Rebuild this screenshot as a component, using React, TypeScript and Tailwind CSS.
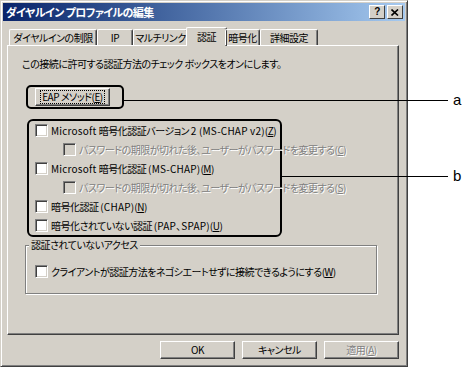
import type { ReactNode } from 'react'

const jp = "font-['MS_UI_Gothic','Noto_Sans_CJK_JP',sans-serif] [font-feature-settings:'palt']"

function Key({ k }: { k: string }) {
  return (
    <>
      (<span className="underline underline-offset-1">{k}</span>)
    </>
  )
}

// latin runs are a bit wider in the original font
function L({ children }: { children: ReactNode }) {
  return <span className="tracking-[0.2px]">{children}</span>
}

function CheckBox({ disabled = false }: { disabled?: boolean }) {
  return (
    <span
      className={`inline-block w-[13px] h-[13px] shrink-0 border border-t-[#808080] border-l-[#808080] border-r-white border-b-white shadow-[inset_1px_1px_0_#404040,inset_-1px_-1px_0_#d4d0c8] ${
        disabled ? 'bg-[#d4d0c8]' : 'bg-white'
      }`}
    />
  )
}

function Row({ children, indent = false, disabled = false }: { children: ReactNode; indent?: boolean; disabled?: boolean }) {
  return (
    <div className={`flex items-center gap-[3px] h-[19px] whitespace-nowrap ${indent ? 'pl-[34px]' : 'pl-[6px]'}`}>
      <CheckBox disabled={disabled} />
      <span className={disabled ? 'text-[#808080] [text-shadow:1px_1px_0_#fff]' : 'text-black'}>{children}</span>
    </div>
  )
}

function Button({ children, disabled = false, focused = false }: { children: ReactNode; disabled?: boolean; focused?: boolean }) {
  return (
    <div
      className={`flex items-center justify-center w-[75px] h-[18px] bg-[#d4d0c8] whitespace-nowrap border border-t-white border-l-white border-r-[#404040] border-b-[#404040] shadow-[inset_-1px_-1px_0_#808080] ${
        disabled ? 'text-[#808080] [text-shadow:1px_1px_0_#fff]' : 'text-black'
      }`}
    >
      <span className={focused ? 'outline outline-1 outline-dotted outline-black px-[1px] leading-[12px]' : ''}>{children}</span>
    </div>
  )
}

const tabs = [
  { label: 'ダイヤルインの制限', w: 'w-[88px]' },
  { label: 'IP', w: 'w-[36px]' },
  { label: 'マルチリンク', w: 'w-[55px]' },
  { label: '認証', w: 'w-[41px]', active: true },
  { label: '暗号化', w: 'w-[35px]' },
  { label: '詳細設定', w: 'w-[58px]' },
]

export default function App() {
  return (
    <div className={`relative w-[466px] h-[372px] bg-white text-[10px] leading-[14px] tracking-[-0.5px] ${jp}`}>
      {/* dialog */}
      <div className="w-[408px] h-[367px] bg-[#d4d0c8] border border-t-[#d4d0c8] border-l-[#d4d0c8] border-r-[#404040] border-b-[#404040] shadow-[inset_1px_1px_0_#fff,inset_-1px_-1px_0_#808080] p-[2px]">
        <div className="flex items-center justify-between h-[18px] pl-[3px] pr-[2px] bg-gradient-to-r from-[#0a246a] to-[#a6caf0]">
          <span className="text-white font-bold text-[11px] leading-[14px] tracking-[-0.6px] whitespace-nowrap">ダイヤルイン プロファイルの編集</span>
          <div className="flex items-center">
            <span className="flex items-center justify-center w-[16px] h-[14px] bg-[#d4d0c8] border border-t-white border-l-white border-r-[#404040] border-b-[#404040] text-[10px] font-bold leading-none text-black font-['Liberation_Sans',sans-serif]">
              ?
            </span>
            <span className="flex items-center justify-center w-[16px] h-[14px] ml-[2px] bg-[#d4d0c8] border border-t-white border-l-white border-r-[#404040] border-b-[#404040] text-black">
              <svg width="8" height="7" viewBox="0 0 8 7">
                <path d="M0.5 0.5 L7 6.5 M7 0.5 L0.5 6.5" stroke="#000" strokeWidth="1.6" />
              </svg>
            </span>
          </div>
        </div>

        {/* tabs */}
        <div className="flex items-end h-[18px] mt-[6px] ml-[6px] relative z-10 whitespace-nowrap">
          {tabs.map((t) =>
            t.active ? (
              <div
                key={t.label}
                className={`${t.w} -mx-[2px] h-[19px] -mb-[1px] flex items-center justify-center bg-[#d4d0c8] border-t border-l border-t-white border-l-white border-r border-r-[#404040] rounded-t-[2px] shadow-[inset_-1px_0_0_#808080]`}
              >
                {t.label}
              </div>
            ) : (
              <div
                key={t.label}
                className={`${t.w} h-[16px] flex items-center justify-center border-t border-l border-t-white border-l-white border-r border-r-[#404040] rounded-t-[2px] shadow-[inset_-1px_0_0_#808080]`}
              >
                {t.label}
              </div>
            )
          )}
        </div>

        {/* panel */}
        <div className="w-[392px] h-[290px] ml-[4px] border border-t-white border-l-white border-r-[#404040] border-b-[#404040] shadow-[inset_-1px_-1px_0_#808080] pt-[11px]">
          <div className="pl-[14px] whitespace-nowrap">この接続に許可する認証方法のチェック ボックスをオンにします。</div>

          <div className="ml-[18px] mt-[14px] w-[98px] h-[24px] border-2 border-black rounded-[5px] pl-[7px] pt-[1px]">
            <Button focused>
              EAP メソッド<Key k="E" />
            </Button>
          </div>

          <div className="ml-[19px] mt-[10px] w-[255px] h-[118px] border-2 border-black rounded-[6px]">
            <Row>
              <L>Microsoft </L>暗号化認証バージョン <L>2 (MS-CHAP v2)</L>
              <Key k="Z" />
            </Row>
            <Row indent disabled>
              パスワードの期限が切れた後、ユーザーがパスワードを変更する<Key k="C" />
            </Row>
            <Row>
              <L>Microsoft </L>暗号化認証 <L>(MS-CHAP)</L>
              <Key k="M" />
            </Row>
            <Row indent disabled>
              パスワードの期限が切れた後、ユーザーがパスワードを変更する<Key k="S" />
            </Row>
            <Row>
              暗号化認証 <L>(CHAP)</L>
              <Key k="N" />
            </Row>
            <Row>
              暗号化されていない認証 <L>(PAP、SPAP)</L>
              <Key k="U" />
            </Row>
          </div>

          <fieldset className="ml-[17px] mt-[1px] w-[352px] h-[56px] border border-[#808080] shadow-[inset_1px_1px_0_#fff,1px_1px_0_#fff]">
            <legend className="ml-[3px] px-[2px] bg-[#d4d0c8] leading-[14px]">認証されていないアクセス</legend>
            <div className="mt-[10px] pl-[3px]">
              <Row>
                クライアントが認証方法をネゴシエートせずに接続できるようにする<Key k="W" />
              </Row>
            </div>
          </fieldset>
        </div>

        {/* buttons */}
        <div className="flex justify-end gap-[7px] w-[396px] mt-[6px]">
          <Button>OK</Button>
          <Button>キャンセル</Button>
          <Button disabled>
            適用<Key k="A" />
          </Button>
        </div>
      </div>

      {/* callout lines */}
      <div className="absolute left-[124px] top-[100px] w-[324px] h-px bg-black" />
      <span className="absolute left-[453px] top-[91px] text-[15px] leading-[18px] tracking-normal font-['Liberation_Sans',sans-serif]">a</span>
      <div className="absolute left-[282px] top-[176px] w-[166px] h-px bg-black" />
      <span className="absolute left-[453px] top-[167px] text-[15px] leading-[18px] tracking-normal font-['Liberation_Sans',sans-serif]">b</span>
    </div>
  )
}
